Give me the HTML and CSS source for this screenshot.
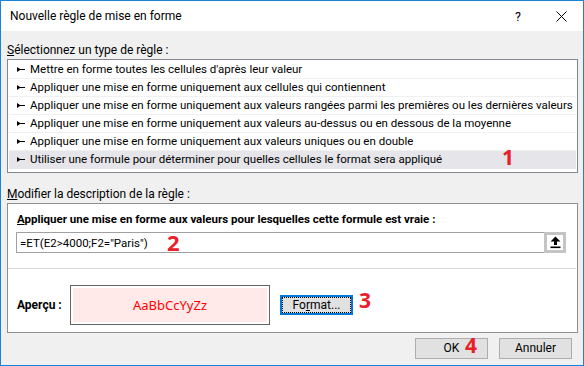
FILE: index.html
```html
<!DOCTYPE html>
<html lang="fr">
<head>
<meta charset="utf-8">
<title>Nouvelle règle de mise en forme</title>
<link rel="stylesheet" href="styles.css">
</head>
<body>
<div class="window">
  <div class="titlebar">
    <span class="title">Nouvelle règle de mise en forme</span>
    <span class="help">?</span>
    <span class="close">
      <svg width="11" height="11" viewBox="0 0 11 11"><path d="M0.5 0.5 L10.5 10.5 M10.5 0.5 L0.5 10.5" stroke="#000" stroke-width="1" fill="none"/></svg>
    </span>
  </div>
  <div class="content">
    <div class="label"><u>S</u>électionnez un type de règle :</div>
    <div class="list">
      <div class="row"><svg class="bullet" width="8" height="7" viewBox="0 0 8 7"><path d="M0 1 L3 3 L8 3 L8 4 L3 4 L0 6 Z" fill="#000"/></svg>Mettre en forme toutes les cellules d'après leur valeur</div>
      <div class="row"><svg class="bullet" width="8" height="7" viewBox="0 0 8 7"><path d="M0 1 L3 3 L8 3 L8 4 L3 4 L0 6 Z" fill="#000"/></svg>Appliquer une mise en forme uniquement aux cellules qui contiennent</div>
      <div class="row"><svg class="bullet" width="8" height="7" viewBox="0 0 8 7"><path d="M0 1 L3 3 L8 3 L8 4 L3 4 L0 6 Z" fill="#000"/></svg>Appliquer une mise en forme uniquement aux valeurs rangées parmi les premières ou les dernières valeurs</div>
      <div class="row"><svg class="bullet" width="8" height="7" viewBox="0 0 8 7"><path d="M0 1 L3 3 L8 3 L8 4 L3 4 L0 6 Z" fill="#000"/></svg>Appliquer une mise en forme uniquement aux valeurs au-dessus ou en dessous de la moyenne</div>
      <div class="row"><svg class="bullet" width="8" height="7" viewBox="0 0 8 7"><path d="M0 1 L3 3 L8 3 L8 4 L3 4 L0 6 Z" fill="#000"/></svg>Appliquer une mise en forme uniquement aux valeurs uniques ou en double</div>
      <div class="row selected"><svg class="bullet" width="8" height="7" viewBox="0 0 8 7"><path d="M0 1 L3 3 L8 3 L8 4 L3 4 L0 6 Z" fill="#000"/></svg>Utiliser une formule pour déterminer pour quelles cellules le format sera appliqué</div>
    </div>
    <div class="label label2"><u>M</u>odifier la description de la règle :</div>
    <div class="group">
      <div class="group-top">
        <div class="bold-label"><u>A</u>ppliquer une mise en forme aux valeurs pour lesquelles cette formule est vraie :</div>
        <div class="input">
          <span class="formula">=ET(E2&gt;4000;F2="Paris")</span>
          <span class="refbtn">
            <svg width="11" height="13" viewBox="0 0 11 13"><path d="M5.5 0.5 L10.5 5.5 L7 5.5 L7 9 L4 9 L4 5.5 L0.5 5.5 Z" fill="#000"/><rect x="0.5" y="10.5" width="10" height="1.6" fill="#000"/></svg>
          </span>
        </div>
      </div>
      <div class="group-bottom">
        <span class="preview-label">Aperçu :</span>
        <div class="preview"><div class="preview-inner">AaBbCcYyZz</div></div>
        <button class="btn format">Fo<u>r</u>mat...</button>
      </div>
    </div>
    <div class="actions">
      <button class="btn ok">OK</button>
      <button class="btn cancel">Annuler</button>
    </div>
  </div>
  <span class="mark m1">1</span>
  <span class="mark m2">2</span>
  <span class="mark m3">3</span>
  <span class="mark m4">4</span>
</div>
</body>
</html>
```
FILE: styles.css
```css
* { box-sizing: border-box; }
html, body { margin: 0; padding: 0; }
body {
  font-family: Roboto, "Noto Sans", sans-serif;
  font-size: 12px;
  color: #000;
  background: #fff;
}
.window {
  position: relative;
  width: 584px;
  height: 366px;
  border: 1px solid #1883d7;
  background: #f0f0f0;
  display: flex;
  flex-direction: column;
}
.titlebar {
  height: 30px;
  background: #fff;
  display: flex;
  align-items: center;
  padding-left: 9px;
  flex: none;
}
.title { font-size: 12px; }
.help {
  margin-left: auto;
  width: 12px;
  text-align: center;
  font-size: 12.5px;
}
.close {
  display: flex;
  margin-left: 32px;
  margin-right: 16px;
}
.content {
  padding: 0 5px 0 6px;
  flex: 1;
  display: flex;
  flex-direction: column;
}
.label {
  height: 16px;
  line-height: 16px;
  margin-top: 11px;
  margin-bottom: 1px;
}
.label2 { margin-top: 13px; }
.list {
  height: 114px;
  background: #fff;
  border: 1px solid #828790;
  padding: 1px 1px;
}
.row {
  height: 18px;
  line-height: 17px;
  border-bottom: 1px solid #f0f0f0;
  padding-left: 8px;
  display: flex;
  align-items: center;
  white-space: nowrap;
  font-size: 11.5px;
}
.row.selected { background: #e5e5ea; border-bottom-color: #e5e5ea; }
.bullet { margin-right: 5px; flex: none; }
.group {
  height: 130px;
  background: #fff;
  border: 1px solid #8e8e8e;
  display: flex;
  flex-direction: column;
}
.group-top {
  padding: 7px 10px 15px 8px;
  border-bottom: 1px solid #dadada;
  margin: 0 1px 0 0;
}
.bold-label {
  font-weight: 700;
  font-size: 11.5px;
  height: 16px;
  line-height: 16px;
  margin-left: 1px;
  margin-bottom: 5px;
  white-space: nowrap;
}
.input {
  height: 21px;
  border: 1px solid #a0a0a0;
  display: flex;
  align-items: center;
  padding-left: 3px;
}
.formula { flex: 1; font-size: 11.5px; }
.refbtn {
  width: 22px;
  height: 21px;
  margin-right: -1px;
  border: 3px solid #c4c4c4;
  background: #fff;
  display: flex;
  align-items: center;
  justify-content: center;
}
.group-bottom {
  display: flex;
  align-items: center;
  padding: 16px 0 0 9px;
}
.preview-label {
  font-weight: 700;
  width: 53px;
}
.preview {
  width: 200px;
  height: 40px;
  border: 1px solid #646464;
  padding: 2px;
  background: #fff;
}
.preview-inner {
  height: 100%;
  background: #ffe9e9;
  color: #ff0000;
  font-family: "Noto Sans", sans-serif;
  font-size: 13px;
  display: flex;
  align-items: center;
  justify-content: center;
}
.btn {
  font-family: inherit;
  font-size: 12px;
  color: #000;
  background: #e1e1e1;
  border: 1px solid #adadad;
  padding: 0;
  height: 21px;
  line-height: 17px;
}
.format {
  margin-left: 10px;
  width: 73px;
  height: 20px;
  border: 2px solid #0078d7;
  outline: 1px dotted #000;
  outline-offset: -3px;
}
.actions {
  display: flex;
  justify-content: flex-end;
  gap: 11px;
  margin-top: 5px;
  padding-right: 6px;
}
.ok, .cancel { width: 73px; }
.mark {
  position: absolute;
  font-family: "Noto Sans", sans-serif;
  font-weight: 700;
  color: #e8202a;
  line-height: 1;
}
.m1 { left: 501px; top: 146px; font-size: 21px; }
.m2 { left: 166px; top: 230px; font-size: 22px; }
.m3 { left: 358px; top: 289px; font-size: 21px; }
.m4 { left: 464px; top: 334px; font-size: 21px; }
```
